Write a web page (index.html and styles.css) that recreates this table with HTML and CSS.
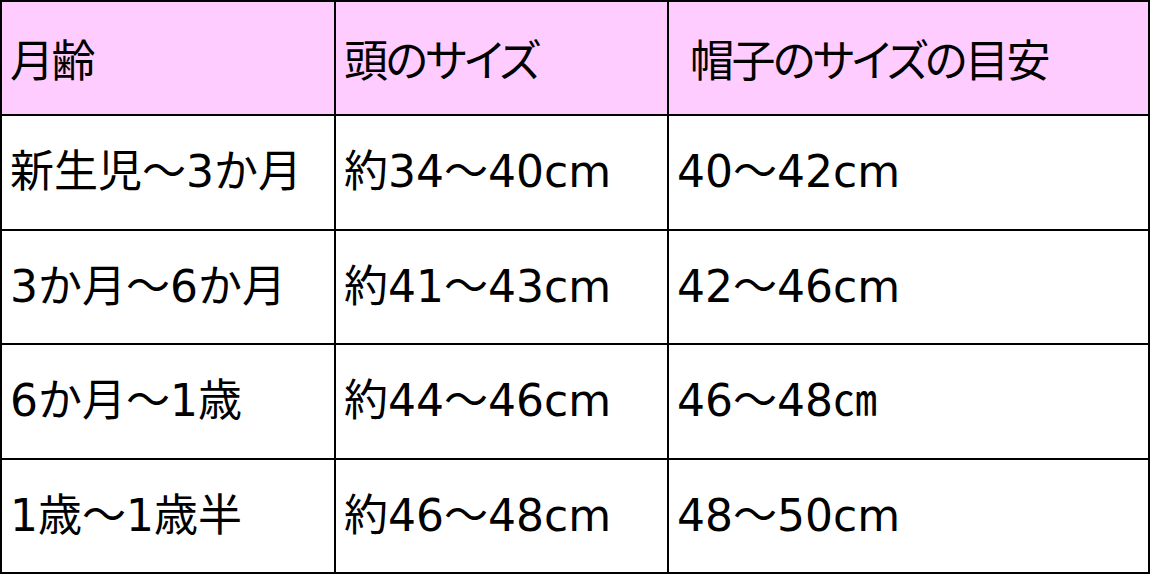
FILE: index.html
```html
<!DOCTYPE html>
<html lang="ja">
<head>
<meta charset="utf-8">
<link rel="stylesheet" href="styles.css">
</head>
<body>
<table class="size-table">
  <colgroup>
    <col class="c1"><col class="c2"><col class="c3">
  </colgroup>
  <thead>
    <tr class="head">
      <th>月齢</th>
      <th>頭のサイズ</th>
      <th class="indent">帽子のサイズの目安</th>
    </tr>
  </thead>
  <tbody>
    <tr><td>新生児～3か月</td><td>約34～40cm</td><td>40～42cm</td></tr>
    <tr><td>3か月～6か月</td><td>約41～43cm</td><td>42～46cm</td></tr>
    <tr><td>6か月～1歳</td><td>約44～46cm</td><td>46～48㎝</td></tr>
    <tr><td>1歳～1歳半</td><td>約46～48cm</td><td>48～50cm</td></tr>
  </tbody>
</table>
</body>
</html>
```
FILE: styles.css
```css
html, body {
  margin: 0;
  padding: 0;
  background: #fff;
}
.size-table {
  border-collapse: collapse;
  table-layout: fixed;
  width: 1148px;
  font-family: "DejaVu Sans", "Noto Sans CJK JP", sans-serif;
  color: #000;
}
.c1 { width: 334px; }
.c2 { width: 333px; }
.c3 { width: 481px; }
.size-table th,
.size-table td {
  border: 2px solid #000;
  height: 112.5px;
  padding: 0 0 0 8px;
  text-align: left;
  font-weight: normal;
  font-size: 44px;
  line-height: 1;
  white-space: nowrap;
}
.head th {
  background: #ffccff;
  height: 112px;
  font-family: "Noto Sans CJK JP", sans-serif;
  font-feature-settings: "palt";
  letter-spacing: -2.5px;
}
.size-table th.indent {
  padding-left: 21px;
}
```
